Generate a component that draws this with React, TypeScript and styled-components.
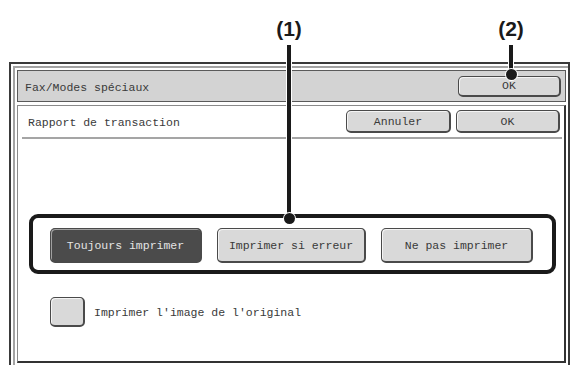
import React, { useState } from "react";
import styled, { createGlobalStyle } from "styled-components";

const GlobalStyle = createGlobalStyle`
  html, body {
    margin: 0;
    padding: 0;
    background: #ffffff;
    overflow: hidden;
  }
  body {
    font-family: "Liberation Mono", "DejaVu Sans Mono", monospace;
    color: #3a3a3a;
  }
`;

const Page = styled.div`
  position: relative;
  width: 570px;
  height: 365px;
  overflow: hidden;
  padding-top: 62px;
  box-sizing: border-box;
`;

const Frame = styled.div`
  margin-left: 9px;
  width: 561px;
  height: 310px;
  box-sizing: border-box;
  border: 2px solid #3a3a3a;
  border-bottom: none;
  padding: 2px 0 0 2px;
`;

const InnerFrame = styled.div`
  height: 100%;
  box-sizing: border-box;
  border-top: 2px solid #a3a3a3;
  border-left: 2px solid #a3a3a3;
  padding: 2px 0 0 2px;
  display: flex;
  flex-direction: column;
`;

const HeaderBar = styled.div`
  height: 32px;
  margin-right: 2px;
  box-sizing: border-box;
  display: flex;
  align-items: center;
  justify-content: space-between;
  background: #d3d3d3;
  border: 1px solid #5a5a5a;
  padding: 0 4px 0 7px;
`;

const Title = styled.span`
  font-size: 11.5px;
  padding-top: 2px;
  color: #3a3a3a;
`;

const Button = styled.button<{ $w: number; $h: number; $active?: boolean }>`
  width: ${(p) => p.$w}px;
  height: ${(p) => p.$h}px;
  box-sizing: border-box;
  padding: 0;
  border-radius: 5px;
  border: 1px solid #4a4a4a;
  border-right-width: 2px;
  border-bottom-width: 2px;
  background: ${(p) => (p.$active ? "#4b4b4b" : "#d9d9d9")};
  color: ${(p) => (p.$active ? "#e4e4e4" : "#3a3a3a")};
  box-shadow: inset 1px 1px 0 ${(p) => (p.$active ? "#a0a0a0" : "#f4f4f4")};
  font-family: "Liberation Mono", "DejaVu Sans Mono", monospace;
  font-size: 11.5px;
  cursor: pointer;
`;

const Panel = styled.div`
  height: 258px;
  margin-top: 3px;
  margin-right: 2px;
  box-sizing: border-box;
  border-top: 1px solid #8a8a8a;
  border-left: 1px solid #8a8a8a;
  border-right: 2px solid #333333;
  border-bottom: 2px solid #333333;
  display: flex;
  flex-direction: column;
`;

const PanelRow = styled.div`
  height: 31px;
  display: flex;
  align-items: center;
  justify-content: space-between;
  padding: 0 4px 0 10px;
`;

const RowButtons = styled.div`
  display: flex;
  gap: 5px;
`;

const Divider = styled.div`
  height: 2px;
  margin: 0 2px 0 4px;
  background: #a5a5a5;
`;

const ChoiceBox = styled.div`
  margin: 75px 8px 0 11px;
  height: 60px;
  box-sizing: border-box;
  border: 4px solid #1a1a1a;
  border-radius: 9px;
  padding: 10px 0 0 17px;
  display: flex;
  gap: 15px;
`;

const CheckRow = styled.label`
  margin: 23px 0 0 32px;
  display: flex;
  align-items: center;
  gap: 9px;
  font-size: 11.5px;
  cursor: pointer;
`;

const CheckBox = styled.span<{ $on: boolean }>`
  width: 35px;
  height: 30px;
  box-sizing: border-box;
  border-radius: 5px;
  border: 1px solid #4a4a4a;
  border-right-width: 2px;
  border-bottom-width: 2px;
  background: ${(p) => (p.$on ? "#4b4b4b" : "#d9d9d9")};
  box-shadow: inset 1px 1px 0 #f4f4f4;
`;

const Callout = styled.div<{ $x: number }>`
  position: absolute;
  top: 18px;
  left: ${(p) => p.$x}px;
  width: 0;
  display: flex;
  flex-direction: column;
  align-items: center;
`;

const CalloutLabel = styled.div`
  font-family: "Liberation Sans", Arial, sans-serif;
  font-weight: bold;
  font-size: 21px;
  line-height: 22px;
  color: #1a1a1a;
  white-space: nowrap;
`;

const CalloutLine = styled.div<{ $len: number }>`
  margin-top: 5px;
  width: 4px;
  height: ${(p) => p.$len}px;
  background: #1a1a1a;
  box-shadow: 0 0 0 1px #ffffff;
`;

const CalloutDot = styled.div`
  margin-top: -6px;
  width: 11px;
  height: 11px;
  border-radius: 50%;
  background: #1a1a1a;
  box-shadow: 0 0 0 1px #ffffff;
`;

const options = ["Toujours imprimer", "Imprimer si erreur", "Ne pas imprimer"];

const App = () => {
  const [choice, setChoice] = useState<number>(0);
  const [printImage, setPrintImage] = useState<boolean>(false);

  return (
    <Page>
      <GlobalStyle />
      <Frame>
        <InnerFrame>
          <HeaderBar>
            <Title>Fax/Modes spéciaux</Title>
            <Button $w={103} $h={21}>
              OK
            </Button>
          </HeaderBar>

          <Panel>
            <PanelRow>
              <Title>Rapport de transaction</Title>
              <RowButtons>
                <Button $w={105} $h={23}>
                  Annuler
                </Button>
                <Button $w={104} $h={23}>
                  OK
                </Button>
              </RowButtons>
            </PanelRow>
            <Divider />

            <ChoiceBox>
              {options.map((label, i) => (
                <Button
                  key={label}
                  $w={i === 1 ? 149 : 152}
                  $h={35}
                  $active={choice === i}
                  onClick={() => setChoice(i)}
                >
                  {label}
                </Button>
              ))}
            </ChoiceBox>

            <CheckRow onClick={() => setPrintImage(!printImage)}>
              <CheckBox $on={printImage} />
              Imprimer l'image de l'original
            </CheckRow>
          </Panel>
        </InnerFrame>
      </Frame>

      <Callout $x={289}>
        <CalloutLabel>(1)</CalloutLabel>
        <CalloutLine $len={174} />
        <CalloutDot />
      </Callout>
      <Callout $x={511}>
        <CalloutLabel>(2)</CalloutLabel>
        <CalloutLine $len={30} />
        <CalloutDot />
      </Callout>
    </Page>
  );
};

export default App;
